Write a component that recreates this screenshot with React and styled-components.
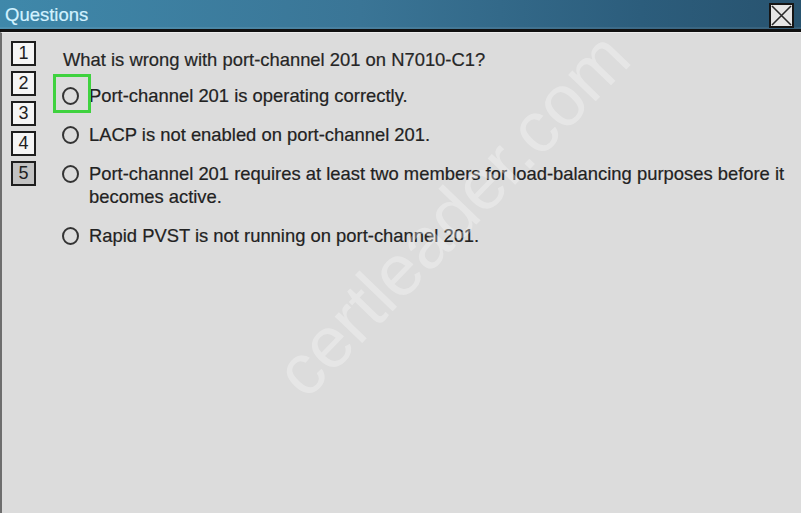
import React from 'react';
import styled, { createGlobalStyle } from 'styled-components';

const GlobalStyle = createGlobalStyle`
  html, body {
    margin: 0;
    padding: 0;
    background: #dcdcdc;
  }
`;

const fontStack = `"Liberation Sans", Arial, sans-serif`;

const Window = styled.div`
  position: relative;
  width: 801px;
  height: 513px;
  background: #dcdcdc;
  display: flex;
  flex-direction: column;
  overflow: hidden;
  font-family: ${fontStack};
`;

const TitleBar = styled.div`
  height: 29px;
  flex: none;
  display: flex;
  align-items: center;
  justify-content: space-between;
  padding: 0 7px 0 5px;
  background: linear-gradient(90deg, #3f88aa 0%, #3a7596 45%, #2c5d7c 80%, #28536f 100%);
  box-shadow: inset 0 -2px 0 rgba(255, 255, 255, 0.08);
  border-bottom: 3px solid #111;
`;

const Title = styled.span`
  color: #d2f2ff;
  font-size: 18.5px;
  line-height: 29px;
  -webkit-text-stroke: 0.2px #d2f2ff;
`;

const CloseButton = styled.button`
  width: 25px;
  height: 25px;
  padding: 0;
  margin-top: 2px;
  border: 2px solid #151515;
  background: #e6e6e6;
  display: flex;
  align-items: center;
  justify-content: center;
  cursor: pointer;
`;

const Body = styled.div`
  flex: 1;
  display: flex;
  border-left: 2px solid #6e6e6e;
  border-top: 1px solid #ececec;
`;

const Nav = styled.nav`
  display: flex;
  flex-direction: column;
  gap: 5px;
  padding: 8px 0 0 9px;
`;

const NavBox = styled.div`
  width: 25px;
  height: 25px;
  box-sizing: border-box;
  border: 2px solid #1e1e1e;
  background: ${p => (p.$active ? '#c2c2c2' : '#f5f5f5')};
  color: #1e1e1e;
  font-size: 18px;
  line-height: 21px;
  text-align: center;
`;

const Content = styled.div`
  flex: 1;
  padding: 15px 4px 0 26px;
  color: #262626;
  font-size: 18.4px;
  line-height: 23px;
`;

const Question = styled.p`
  margin: 0 0 13px 1px;
  -webkit-text-stroke: 0.2px #262626;
`;

const OptionList = styled.div`
  display: flex;
  flex-direction: column;
  gap: 16px;
`;

const Option = styled.label`
  display: flex;
  align-items: flex-start;
  gap: 10px;
  cursor: pointer;
`;

const Radio = styled.span`
  position: relative;
  flex: none;
  width: 17px;
  height: 18px;
  margin-top: 3px;
  box-sizing: border-box;
  border: 2px solid #333;
  border-radius: 50%;

  &::after {
    content: '';
    display: ${p => (p.$focused ? 'block' : 'none')};
    position: absolute;
    left: -11px;
    top: -15px;
    width: 38px;
    height: 39px;
    box-sizing: border-box;
    border: 3px solid #3fd23f;
  }
`;

const OptionText = styled.span`
  color: #222;
  -webkit-text-stroke: 0.2px #222;
`;

const Watermark = styled.div`
  position: absolute;
  left: 452px;
  top: 214px;
  transform: translate(-50%, -50%) rotate(-46deg);
  font-size: 72px;
  color: rgba(255, 255, 255, 0.3);
  white-space: nowrap;
  pointer-events: none;
`;

const options = [
  'Port-channel 201 is operating correctly.',
  'LACP is not enabled on port-channel 201.',
  'Port-channel 201 requires at least two members for load-balancing purposes before it becomes active.',
  'Rapid PVST is not running on port-channel 201.',
];

export default function App() {
  return (
    <>
      <GlobalStyle />
      <Window>
        <TitleBar>
          <Title>Questions</Title>
          <CloseButton aria-label="Close">
            <svg width="21" height="21" viewBox="0 0 21 21">
              <path d="M1 1 L20 20 M20 1 L1 20" stroke="#2a2a2a" strokeWidth="1.6" />
            </svg>
          </CloseButton>
        </TitleBar>
        <Body>
          <Nav>
            {[1, 2, 3, 4, 5].map(n => (
              <NavBox key={n} $active={n === 5}>{n}</NavBox>
            ))}
          </Nav>
          <Content>
            <Question>What is wrong with port-channel 201 on N7010-C1?</Question>
            <OptionList>
              {options.map((text, i) => (
                <Option key={i}>
                  <Radio $focused={i === 0} />
                  <OptionText>{text}</OptionText>
                </Option>
              ))}
            </OptionList>
          </Content>
        </Body>
        <Watermark>certleader.com</Watermark>
      </Window>
    </>
  );
}
